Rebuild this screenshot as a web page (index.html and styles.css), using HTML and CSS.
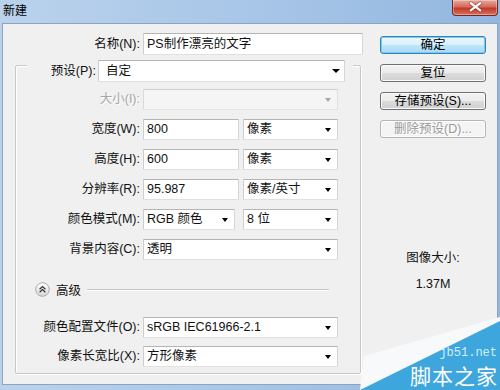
FILE: index.html
```html
<!DOCTYPE html>
<html lang="zh-CN">
<head>
<meta charset="utf-8">
<title>新建</title>
<link rel="stylesheet" href="styles.css">
</head>
<body>
<div class="window">
  <div class="titlebar">
    <span class="title">新建</span>
    <div class="close">
      <svg width="46" height="16" viewBox="0 0 46 16">
        <path d="M18.5 3 L28.5 10.5 M28.5 3 L18.5 10.5" stroke="#6b2119" stroke-width="4" stroke-linecap="round" opacity="0.45"/>
        <path d="M18.5 3 L28.5 10.5 M28.5 3 L18.5 10.5" stroke="#ffffff" stroke-width="2.3" stroke-linecap="round"/>
      </svg>
    </div>
  </div>
  <div class="client">
    <div class="form">
      <div class="name-row">
        <span class="lbl name-lbl">名称(N):</span>
        <div class="field name-field">PS制作漂亮的文字</div>
      </div>
      <div class="group">
        <div class="preset-row">
          <span class="lbl preset-lbl">预设(P):</span>
          <div class="field select preset-select"><span>自定</span><i class="arrow big"></i></div>
        </div>
        <div class="row first">
          <span class="lbl disabled-text">大小(I):</span>
          <div class="field select w195 disabled"><span></span><i class="arrow grey"></i></div>
        </div>
        <div class="row">
          <span class="lbl">宽度(W):</span>
          <div class="field w96">800</div>
          <div class="field select unit"><span>像素</span><i class="arrow"></i></div>
        </div>
        <div class="row">
          <span class="lbl">高度(H):</span>
          <div class="field w96">600</div>
          <div class="field select unit"><span>像素</span><i class="arrow"></i></div>
        </div>
        <div class="row">
          <span class="lbl">分辨率(R):</span>
          <div class="field w96">95.987</div>
          <div class="field select unit"><span>像素/英寸</span><i class="arrow"></i></div>
        </div>
        <div class="row">
          <span class="lbl">颜色模式(M):</span>
          <div class="field select w92"><span>RGB 颜色</span><i class="arrow"></i></div>
          <div class="field select unit bits"><span>8 位</span><i class="arrow"></i></div>
        </div>
        <div class="row">
          <span class="lbl">背景内容(C):</span>
          <div class="field select w195"><span>透明</span><i class="arrow"></i></div>
        </div>
        <div class="adv">
          <svg class="adv-icon" width="15" height="15" viewBox="0 0 15 15">
            <defs>
              <linearGradient id="g" x1="0" y1="0" x2="0" y2="1">
                <stop offset="0" stop-color="#ffffff"/>
                <stop offset="1" stop-color="#d6d6d6"/>
              </linearGradient>
            </defs>
            <circle cx="7.5" cy="7.5" r="6.8" fill="url(#g)" stroke="#a9a9a9" stroke-width="1"/>
            <path d="M4.6 7.2 L7.5 4.6 L10.4 7.2 M4.6 10.2 L7.5 7.6 L10.4 10.2" fill="none" stroke="#333" stroke-width="1.2"/>
          </svg>
          <span class="adv-text">高级</span>
          <span class="adv-line"></span>
        </div>
        <div class="row profile">
          <span class="lbl">颜色配置文件(O):</span>
          <div class="field select w195"><span>sRGB IEC61966-2.1</span><i class="arrow"></i></div>
        </div>
        <div class="row ratio">
          <span class="lbl">像素长宽比(X):</span>
          <div class="field select w195"><span>方形像素</span><i class="arrow"></i></div>
        </div>
      </div>
    </div>
    <div class="side">
      <div class="btn default">确定</div>
      <div class="btn">复位</div>
      <div class="btn">存储预设(S)...</div>
      <div class="btn disabled">删除预设(D)...</div>
      <div class="info">
        <div class="info-title">图像大小:</div>
        <div class="info-value">1.37M</div>
      </div>
    </div>
  </div>
  <svg class="wm-shape" width="145" height="80" viewBox="0 0 145 80">
    <polygon points="5,80 9,46 145,7 145,80" fill="#f7f9fb"/>
    <polygon points="5,80 145,11 145,80" fill="#3da6dc"/>
  </svg>
  <div class="wm-url">jb51.net</div>
  <div class="wm-name">脚本之家</div>
</div>
</body>
</html>
```

FILE: styles.css
```css
* { box-sizing: border-box; }
html, body { margin: 0; padding: 0; }
body {
  width: 500px;
  height: 390px;
  overflow: hidden;
  font-family: "Liberation Sans", "Noto Sans CJK SC", sans-serif;
  font-size: 12.5px;
  color: #111;
}
.window {
  position: relative;
  width: 500px;
  height: 390px;
  overflow: hidden;
  background: linear-gradient(to right, #bad2ec 0%, #a8c6e8 50%, #92b6df 100%);
  display: flex;
  flex-direction: column;
}
.titlebar {
  height: 23px;
  display: flex;
  justify-content: space-between;
  align-items: flex-start;
  flex-shrink: 0;
}
.title {
  font-family: "Noto Sans CJK SC", sans-serif;
  font-size: 12px;
  line-height: 12px;
  padding: 4px 0 0 3px;
  color: #000;
}
.close {
  width: 46px;
  height: 16px;
  margin-right: 2px;
  border: 1px solid #6e2a22;
  border-top: none;
  border-radius: 0 0 4px 4px;
  background: linear-gradient(#e6a99c 0%, #d4695a 45%, #c13a2a 55%, #d7705f 100%);
  box-shadow: inset 0 0 0 1px rgba(255,255,255,0.35);
  display: flex;
}
.client {
  margin: 0 2px;
  height: 362px;
  border: 1px solid #8ea4bd;
  background: #f0f0f0;
  display: flex;
  flex-shrink: 0;
}
.form {
  width: 358px;
  flex-shrink: 0;
  padding-left: 12px;
  padding-top: 9px;
}
.name-row {
  display: flex;
  height: 22px;
}
.lbl {
  width: 124px;
  margin-right: 3px;
  text-align: right;
  line-height: 21px;
  white-space: nowrap;
  flex-shrink: 0;
}
.name-lbl { width: 125px; line-height: 22px; }
.field {
  height: 21px;
  background: #fff;
  border: 1px solid;
  border-color: #b4b4b4 #d6d6d6 #e0e0e0 #cecece;
  border-radius: 1px;
  padding-left: 3px;
  line-height: 19px;
  white-space: nowrap;
  flex-shrink: 0;
}
.name-field { width: 220px; height: 22px; line-height: 20px; }
.select {
  display: flex;
  align-items: center;
  justify-content: space-between;
  padding-right: 6px;
}
.arrow {
  width: 0;
  height: 0;
  border-left: 3px solid transparent;
  border-right: 3px solid transparent;
  border-top: 4px solid #000;
}
.arrow.big {
  border-left-width: 4px;
  border-right-width: 4px;
}
.arrow.grey { border-top-color: #a8a8a8; }
.group {
  margin-top: 10px;
  width: 346px;
  border: 1px solid #c8c8c8;
  border-radius: 2px;
  box-shadow: inset 1px 1px 0 #fff, 1px 1px 0 #fff;
  padding-bottom: 6px;
}
.preset-row {
  display: flex;
  height: 22px;
  margin: -6px 7px 0 11px;
  padding-right: 7px;
  background: #f0f0f0;
}
.preset-lbl { width: 69px; margin-right: 2px; line-height: 22px; }
.preset-select {
  width: 247px;
  height: 22px;
  padding-left: 7px;
  padding-right: 4px;
  line-height: 20px;
}
.row {
  display: flex;
  height: 21px;
  margin-top: 9px;
}
.row.first { margin-top: 7px; }
.w96 { width: 96px; }
.w92 { width: 92px; }
.w195 { width: 195px; }
.unit { width: 95px; margin-left: 4px; }
.unit.bits { margin-left: 8px; }
.disabled-text {
  color: #a6a6a6;
  text-shadow: 1px 1px 0 #fff;
}
.field.disabled {
  background: #f5f5f5;
  border-color: #cfcfcf #e0e0e0 #e4e4e4 #dadada;
}
.adv {
  display: flex;
  align-items: center;
  height: 15px;
  margin-top: 22px;
  padding-left: 19px;
  padding-right: 31px;
}
.adv-icon { flex-shrink: 0; }
.adv-text {
  margin-left: 6px;
  font-family: "Noto Sans CJK SC", sans-serif;
  line-height: 15px;
}
.adv-line {
  flex: 1;
  margin-left: 6px;
  height: 2px;
  border-top: 1px solid #c6c6c6;
  border-bottom: 1px solid #fff;
}
.row.profile { margin-top: 20px; }
.row.ratio { margin-top: 8px; }
.side {
  flex: 1;
  display: flex;
  flex-direction: column;
  padding-top: 12px;
  padding-left: 19px;
}
.btn {
  width: 106px;
  height: 18px;
  border: 1px solid #707070;
  border-radius: 3px;
  background: linear-gradient(#f2f2f2 0%, #ebebeb 50%, #dddddd 51%, #cfcfcf 100%);
  box-shadow: inset 0 0 0 1px #fbfbfb;
  text-align: center;
  line-height: 16px;
  white-space: nowrap;
  color: #000;
}
.btn + .btn { margin-top: 10px; }
.btn.default {
  border-color: #3c7fb1;
  background: linear-gradient(#eaf6fd 0%, #d9f0fc 50%, #bee6fd 51%, #a7d9f5 100%);
  box-shadow: inset 0 0 0 1px #6fd0f5;
}
.btn.disabled {
  border-color: #b5b5b5;
  background: #f4f4f4;
  box-shadow: inset 0 0 0 1px #fcfcfc;
  color: #9a9a9a;
  text-shadow: 1px 1px 0 #fff;
}
.info {
  width: 106px;
  margin-top: 112px;
  text-align: center;
  line-height: 16px;
}
.info-value { margin-top: 10px; }
.wm-shape {
  position: absolute;
  left: 355px;
  top: 310px;
}
.wm-url {
  position: absolute;
  right: 3px;
  top: 346px;
  font-family: "Liberation Mono", monospace;
  font-size: 12px;
  line-height: normal;
  color: #d3eefb;
}
.wm-name {
  position: absolute;
  right: 2px;
  top: 360px;
  font-family: "Noto Sans CJK SC", sans-serif;
  font-size: 21px;
  line-height: normal;
  letter-spacing: 1px;
  color: #fff;
}
```
